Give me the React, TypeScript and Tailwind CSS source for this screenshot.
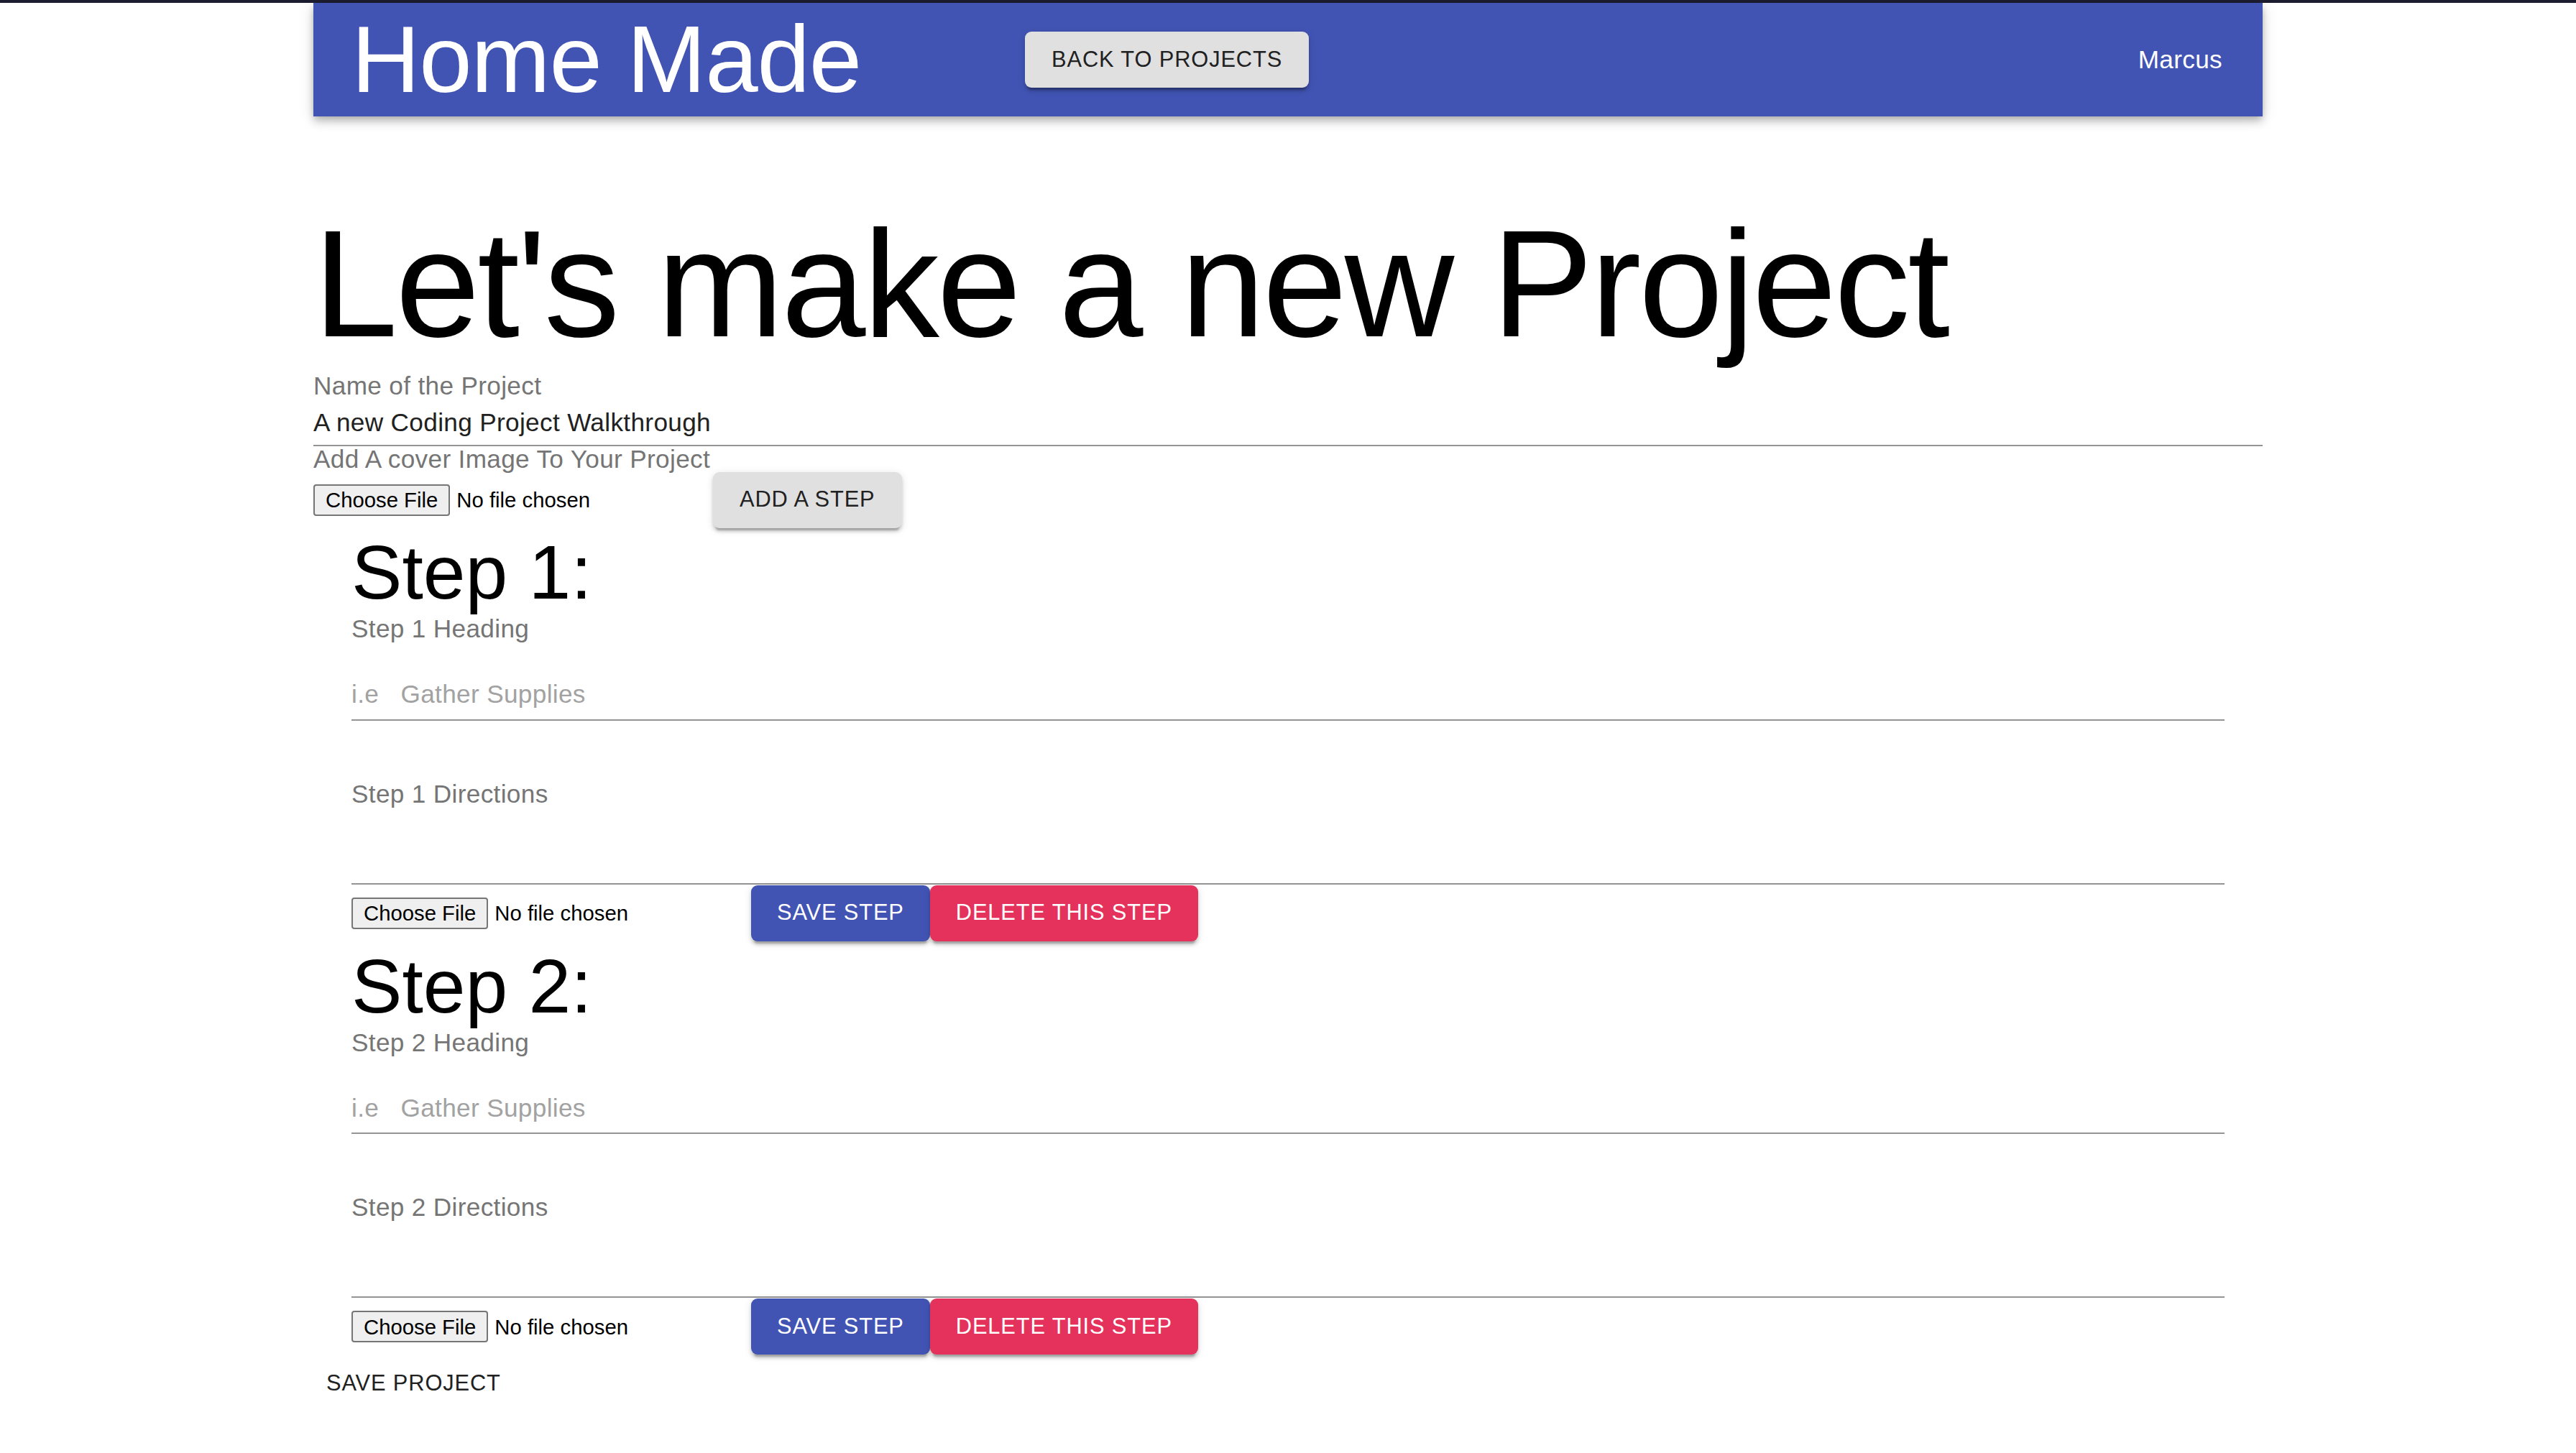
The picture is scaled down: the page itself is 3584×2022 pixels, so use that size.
import type { ReactNode } from 'react';

type Tone = 'grey' | 'primary' | 'secondary' | 'text';

const tones: Record<Tone, string> = {
  grey: 'bg-[#e0e0e0] text-[#212121] shadow-[0_6.6px_2.2px_-4.4px_rgba(0,0,0,0.2),0_4.4px_4.4px_0_rgba(0,0,0,0.14),0_2.2px_11px_0_rgba(0,0,0,0.12)] px-[37px]',
  primary: 'bg-[#4254b3] text-white shadow-[0_6.6px_2.2px_-4.4px_rgba(0,0,0,0.2),0_4.4px_4.4px_0_rgba(0,0,0,0.14),0_2.2px_11px_0_rgba(0,0,0,0.12)] px-[36px]',
  secondary: 'bg-[#e4325c] text-white shadow-[0_6.6px_2.2px_-4.4px_rgba(0,0,0,0.2),0_4.4px_4.4px_0_rgba(0,0,0,0.14),0_2.2px_11px_0_rgba(0,0,0,0.12)] px-[36px]',
  text: 'bg-transparent text-[#212121] px-[18px]',
};

function Btn({ tone, children }: { tone: Tone; children: ReactNode }) {
  return (
    <button
      type="button"
      className={`flex h-[78px] shrink-0 items-center rounded-[9px] text-[30.8px] leading-none uppercase tracking-[0.02857em] ${tones[tone]}`}
    >
      {children}
    </button>
  );
}

// fake native file input (chrome look)
function FileInput() {
  return (
    <div className="flex w-[556px] shrink-0 items-center gap-[9px] text-[29.3px] leading-none text-black">
      <span className="flex h-[44px] items-center rounded-[4px] border-2 border-[#767676] bg-[#efefef] px-[15px]">
        Choose File
      </span>
      <span>No file chosen</span>
    </div>
  );
}

function Label({ children }: { children: ReactNode }) {
  return <label className="block text-[35.2px] leading-none tracking-[0.00938em] text-[#757575]">{children}</label>;
}

function Step({ n }: { n: number }) {
  return (
    <section className="px-[53px]">
      <h3 className="text-[105.6px] leading-[122px] text-black">Step {n}:</h3>

      <div className="border-b-2 border-[#949494]">
        <Label>Step {n} Heading</Label>
        <div className="whitespace-pre pt-[56px] pb-[17px] text-[35.2px] leading-none tracking-[0.00938em] text-[#a2a2a2]">
          i.e   Gather Supplies
        </div>
      </div>

      <div className="border-b-2 border-[#949494] pt-[84px] pb-[107px]">
        <Label>Step {n} Directions</Label>
      </div>

      <div className="flex h-[80px] items-center">
        <FileInput />
        <Btn tone="primary">Save Step</Btn>
        <Btn tone="secondary">Delete This Step</Btn>
      </div>
    </section>
  );
}

export default function App() {
  return (
    <div className="min-h-screen bg-white font-['Liberation_Sans',Arial,sans-serif]">
      <div className="h-[4px] bg-[#1c1d30]" />

      <div className="mx-auto w-[2712px]">
        {/* App bar */}
        <header className="flex h-[158px] items-center bg-[#4254b3] px-[53px] text-white shadow-[0_4.4px_8.8px_-2.2px_rgba(0,0,0,0.2),0_8.8px_11px_0_rgba(0,0,0,0.14),0_2.2px_22px_0_rgba(0,0,0,0.12)]">
          <h2 className="text-[132px] leading-[158.4px] font-light tracking-[-0.00833em]">Home Made</h2>
          <div className="ml-[228px]">
            <Btn tone="grey">Back to Projects</Btn>
          </div>
          <span className="ml-auto mr-[3px] text-[35.2px] leading-none tracking-[0.00938em]">Marcus</span>
        </header>

        <h1 className="mt-[110px] text-[211.2px] leading-[246.5px] font-light tracking-[-0.01562em] text-black">
          Let's make a new Project
        </h1>

        <div className="border-b-2 border-[#949494]">
          <Label>Name of the Project</Label>
          <div className="pt-[16px] pb-[14px] text-[35.2px] leading-none tracking-[0.00938em] text-[#212121]">
            A new Coding Project Walkthrough
          </div>
        </div>
        <Label>Add A cover Image To Your Project</Label>
        <div className="flex h-[79px] items-center">
          <FileInput />
          <Btn tone="grey">Add a Step</Btn>
        </div>

        <Step n={1} />
        <Step n={2} />

        <div className="flex">
          <Btn tone="text">Save Project</Btn>
        </div>
      </div>
    </div>
  );
}
